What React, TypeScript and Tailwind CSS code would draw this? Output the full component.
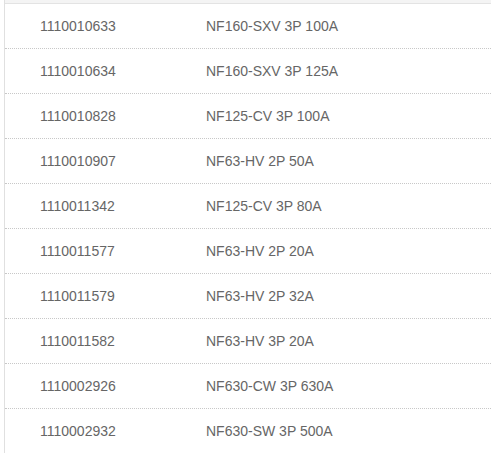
const rows = [
  ["1110010633", "NF160-SXV 3P 100A"],
  ["1110010634", "NF160-SXV 3P 125A"],
  ["1110010828", "NF125-CV 3P 100A"],
  ["1110010907", "NF63-HV 2P 50A"],
  ["1110011342", "NF125-CV 3P 80A"],
  ["1110011577", "NF63-HV 2P 20A"],
  ["1110011579", "NF63-HV 2P 32A"],
  ["1110011582", "NF63-HV 3P 20A"],
  ["1110002926", "NF630-CW 3P 630A"],
  ["1110002932", "NF630-SW 3P 500A"],
];

export default function App() {
  return (
    <div className="h-[453px] w-[491px] overflow-hidden bg-white pl-1 font-['Liberation_Sans',sans-serif] text-[14px] text-[#666]">
      <div className="h-full border-l border-[#e0e0e0]">
        <div className="h-[4px] border-b border-[#e3e3e3] bg-[#f4f4f4]" />
        <ul>
          {rows.map(([code, name], i) => (
            <li
              key={code}
              className={
                i < rows.length - 1
                  ? "flex h-[45px] items-center border-b border-dotted border-[#c8c8c8]"
                  : "flex h-[45px] items-center"
              }
            >
              <span className="w-[201px] pl-[35px]">{code}</span>
              <span>{name}</span>
            </li>
          ))}
        </ul>
      </div>
    </div>
  );
}
